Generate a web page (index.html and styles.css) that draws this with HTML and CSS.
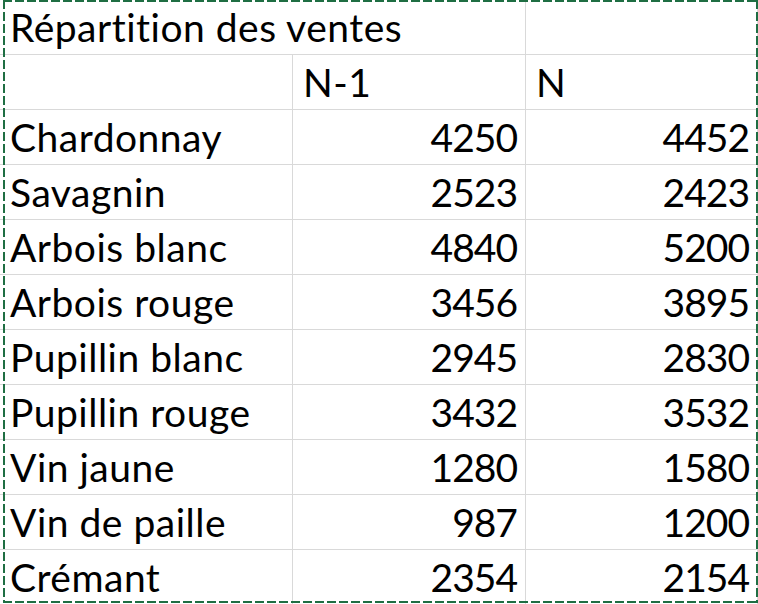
FILE: index.html
```html
<!DOCTYPE html>
<html lang="fr">
<head>
<meta charset="utf-8">
<title>Répartition des ventes</title>
<link rel="stylesheet" href="styles.css">
</head>
<body>
<div class="sheet">
  <div class="grid">
    <div class="cell title">Répartition des ventes</div>
    <div class="cell"></div>

    <div class="cell"></div>
    <div class="cell">N-1</div>
    <div class="cell">N</div>

    <div class="cell">Chardonnay</div>
    <div class="cell num">4250</div>
    <div class="cell num">4452</div>

    <div class="cell">Savagnin</div>
    <div class="cell num">2523</div>
    <div class="cell num">2423</div>

    <div class="cell">Arbois blanc</div>
    <div class="cell num">4840</div>
    <div class="cell num">5200</div>

    <div class="cell">Arbois rouge</div>
    <div class="cell num">3456</div>
    <div class="cell num">3895</div>

    <div class="cell">Pupillin blanc</div>
    <div class="cell num">2945</div>
    <div class="cell num">2830</div>

    <div class="cell">Pupillin rouge</div>
    <div class="cell num">3432</div>
    <div class="cell num">3532</div>

    <div class="cell">Vin jaune</div>
    <div class="cell num">1280</div>
    <div class="cell num">1580</div>

    <div class="cell">Vin de paille</div>
    <div class="cell num">987</div>
    <div class="cell num">1200</div>

    <div class="cell">Crémant</div>
    <div class="cell num">2354</div>
    <div class="cell num">2154</div>
  </div>
  <div class="marquee"></div>
</div>
</body>
</html>
```
FILE: styles.css
```css
html, body {
  margin: 0;
  padding: 0;
  background: #ffffff;
  overflow: hidden;
}
.sheet {
  position: relative;
  width: 758px;
  height: 604px;
  overflow: hidden;
}
.grid {
  display: grid;
  grid-template-columns: 293px 233px 232px;
  grid-auto-rows: 55px;
  font-family: Lato, "Open Sans", sans-serif;
  font-size: 39px;
  letter-spacing: 0.5px;
  font-variant-ligatures: none;
  color: #000;
}
.cell {
  box-sizing: border-box;
  border-right: 1px solid #d9d9d9;
  border-bottom: 1px solid #d9d9d9;
  display: flex;
  align-items: flex-end;
  padding: 0 8px 5px 10px;
  line-height: 44px;
  white-space: nowrap;
}
.title {
  grid-column: span 2;
}
.num {
  justify-content: flex-end;
  letter-spacing: -1px;
}
.marquee {
  position: absolute;
  left: 3px;
  top: 0;
  width: 755px;
  height: 603px;
  box-sizing: border-box;
  background:
    repeating-linear-gradient(90deg, #1f6e43 0 9px, transparent 9px 12px) top left / 100% 2px no-repeat,
    repeating-linear-gradient(90deg, #1f6e43 0 9px, transparent 9px 12px) bottom left / 100% 2px no-repeat,
    repeating-linear-gradient(180deg, #1f6e43 0 9px, transparent 9px 12px) top left / 2px 100% no-repeat,
    repeating-linear-gradient(180deg, #1f6e43 0 9px, transparent 9px 12px) top right / 2px 100% no-repeat;
}
```
